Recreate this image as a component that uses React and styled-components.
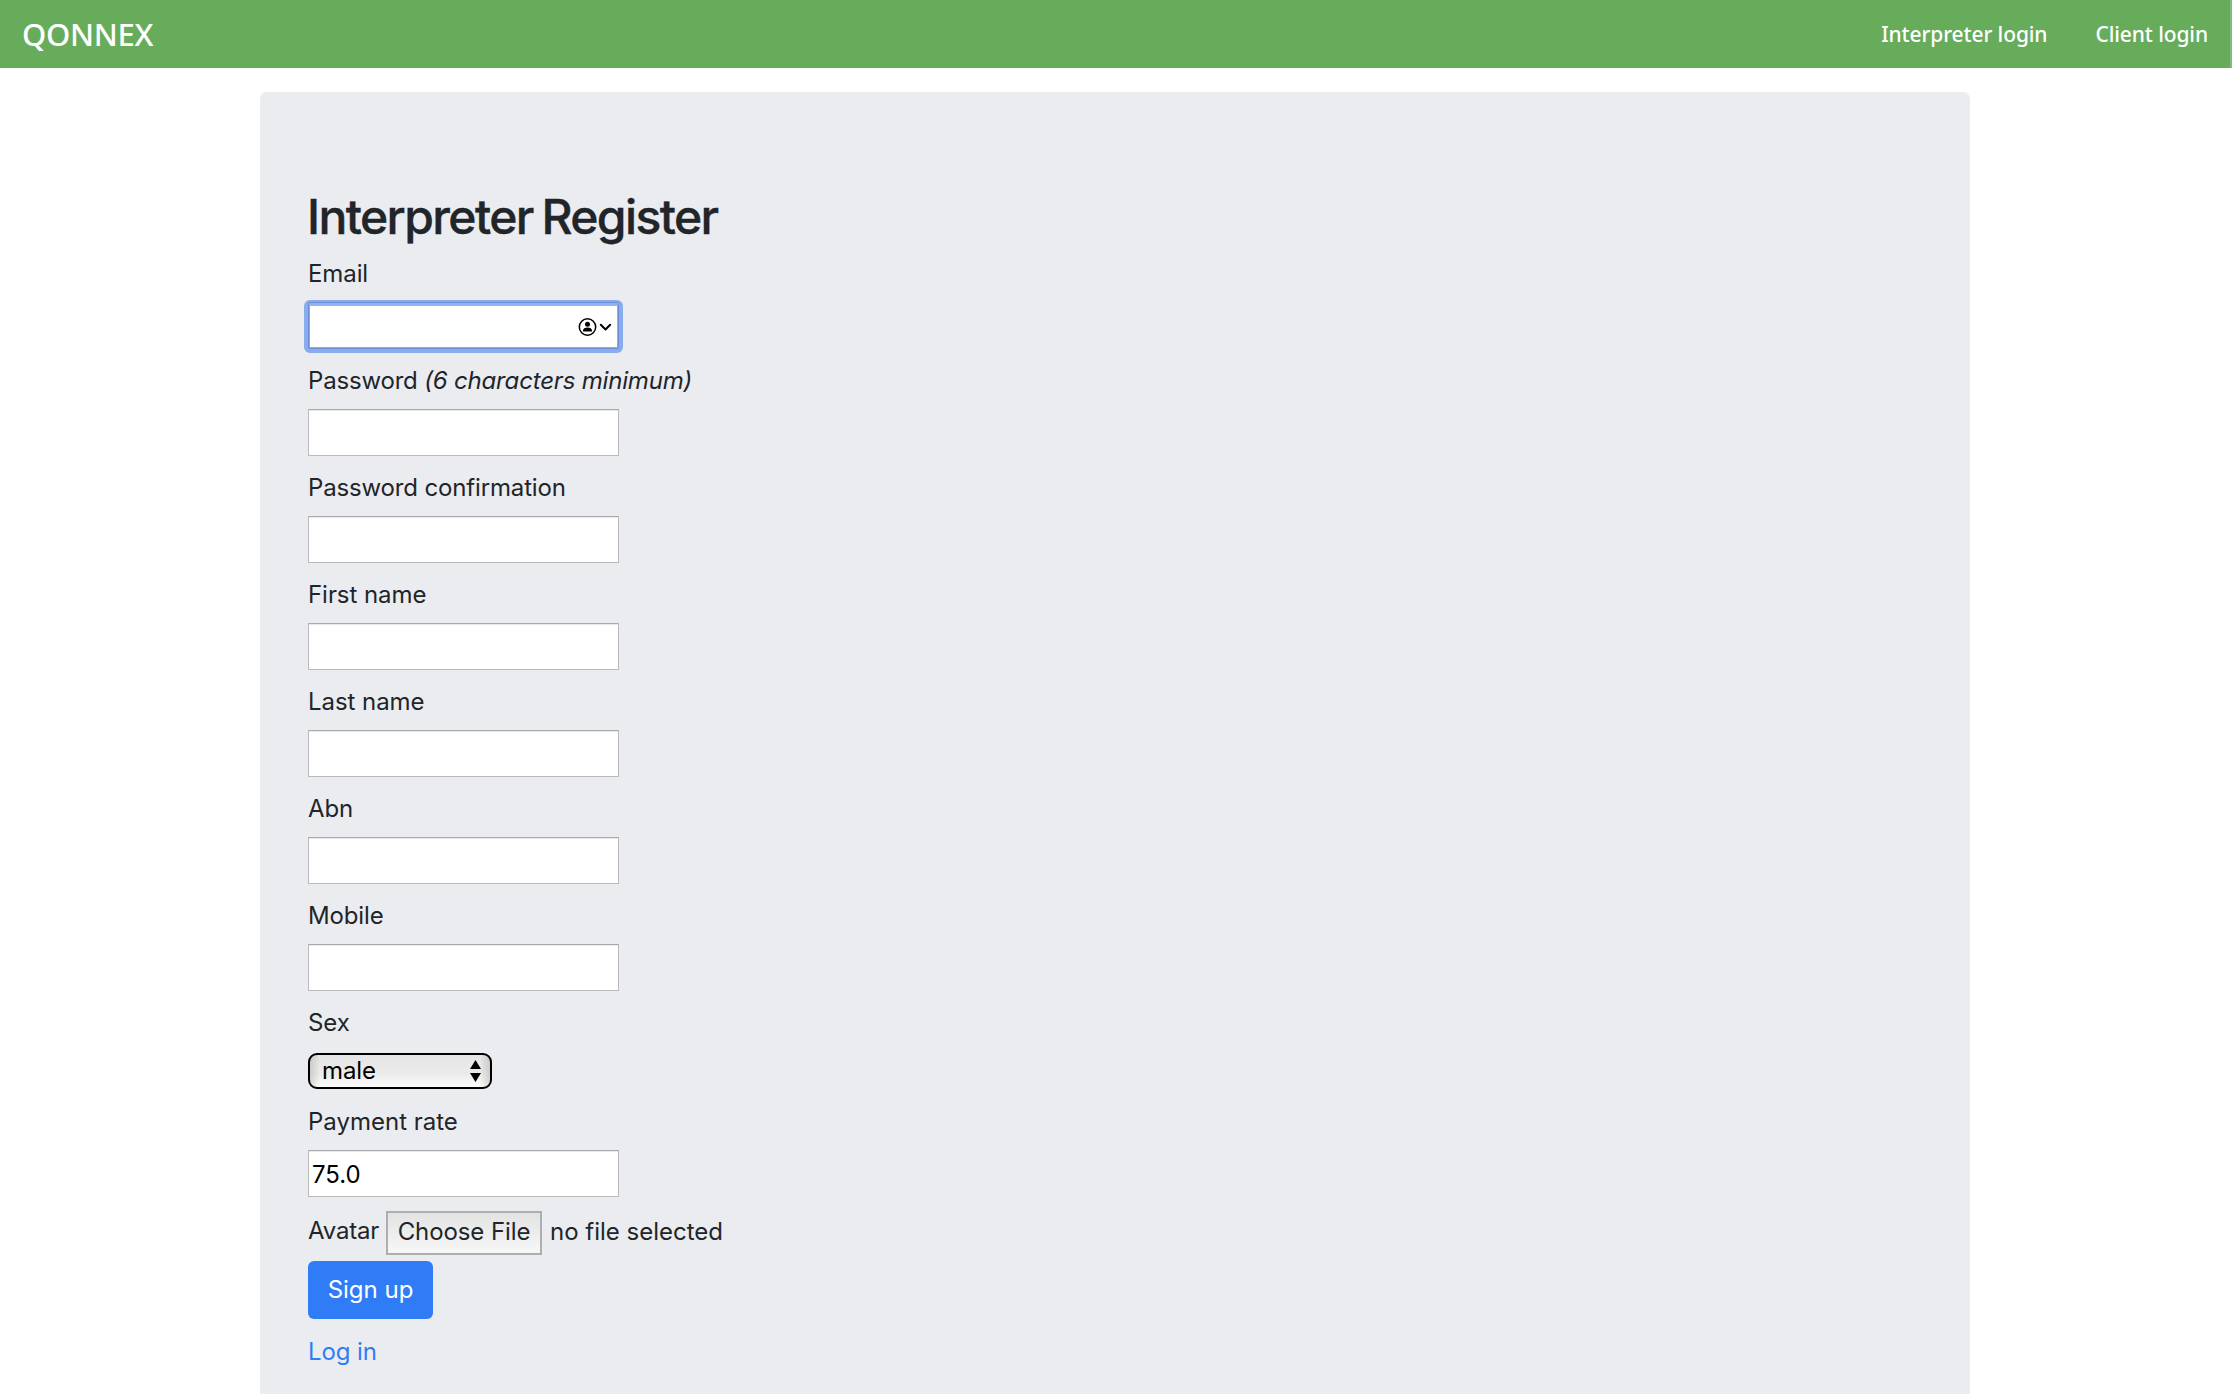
import React from "react";
import styled, { createGlobalStyle } from "styled-components";

const Global = createGlobalStyle`
  * { box-sizing: border-box; }
  html, body { margin: 0; height: 1394px; overflow: hidden; background: #fff; }
  body { font: 400 24px/36px Inter, "Liberation Sans", sans-serif; color: #212529; }
`;

const Navbar = styled.nav`
  display: flex;
  align-items: center;
  justify-content: space-between;
  height: 68px;
  padding: 0 22px 0 22px;
  background: #67ac5b;
  border-right: 2px solid #83bb7a;
  font-family: "Noto Sans", sans-serif;
  font-weight: 500;
  white-space: nowrap;
`;

const Brand = styled.a`
  color: #fff;
  font-size: 31px;
  letter-spacing: -0.3px;
`;

const NavLinks = styled.div`
  display: flex;
  gap: 48px;
`;

const NavLink = styled.a`
  color: #fff;
  font-size: 21px;
  letter-spacing: -0.1px;
`;

const Card = styled.main`
  width: 1710px;
  height: 1302px;
  margin: 24px 0 0 260px;
  padding: 96px 48px 0;
  background: #ebecf0;
  border-radius: 7px 7px 0 0;
`;

const Title = styled.h1`
  margin: 0 0 10px -1px;
  font-size: 48px;
  line-height: 58px;
  font-weight: 500;
  letter-spacing: -1.6px;
  word-spacing: -2.5px;
  white-space: nowrap;
  -webkit-text-stroke: 0.4px currentColor;
`;

const Field = styled.div`
  display: flex;
  flex-direction: column;
  align-items: flex-start;
  margin-bottom: ${(p) => p.$gap || 14}px;
`;

const Label = styled.label`
  margin-bottom: ${(p) => p.$gap || 10}px;
  letter-spacing: ${(p) => p.$track || "-0.1px"};
  white-space: nowrap;
`;

const Input = styled.div`
  display: flex;
  align-items: center;
  width: 311px;
  height: 47px;
  padding: 3px 4px 0 3px;
  background: #fff;
  border: 1px solid #b9babc;
  border-top-color: #a9aaad;
  box-shadow: inset 0 1px 0 #e9e9ea;
  color: #000;
`;

const FocusedInput = styled(Input)`
  justify-content: flex-end;
  padding: 3px 6px 0 0;
  border-color: #6c8fd5;
  box-shadow: 0 0 0 4px #8aabee, inset 0 3px 0 #92b1f2, inset 1px 0 0 #8aabee, inset -1px 0 0 #8aabee, inset 0 -1px 0 #8aabee;
  border-radius: 1px;
  clip-path: inset(-2px -4px -4px -4px round 6px);
`;

const Select = styled.div`
  display: flex;
  align-items: center;
  justify-content: space-between;
  width: 184px;
  height: 36px;
  padding: 0 9px 0 12px;
  border: 2px solid #000;
  border-radius: 9px;
  background: linear-gradient(90deg, rgba(150,150,150,.35), transparent 10px, transparent calc(100% - 10px), rgba(150,150,150,.35)), linear-gradient(#e5e5e5, #ebebeb 60%, #fdfdfd);
  color: #000;
  letter-spacing: -0.1px;
`;

const FileRow = styled.div`
  display: flex;
  align-items: center;
  height: 44px;
  margin-bottom: 6px;
  white-space: nowrap;
`;

const FileLabel = styled.span`
  width: 78px;
  padding-bottom: 4px;
  letter-spacing: -0.2px;
`;

const FileButton = styled.span`
  display: flex;
  align-items: center;
  justify-content: center;
  width: 156px;
  height: 44px;
  margin-right: 8px;
  padding-bottom: 2px;
  border: 2px solid #adaeae;
  background: linear-gradient(#e3e3e3, #f7f7f7);
  letter-spacing: -0.1px;
`;

const FileStatus = styled.span`
  padding-bottom: 2px;
`;

const SubmitButton = styled.button`
  display: flex;
  align-items: center;
  justify-content: center;
  width: 125px;
  height: 58px;
  padding: 0;
  border: 0;
  border-radius: 6px;
  background: #307cf7;
  color: #fff;
  font: inherit;
`;

const LoginLink = styled.a`
  display: block;
  margin-top: 15px;
  color: #307cf7;
  letter-spacing: -0.1px;
`;

const names = ["Password confirmation", "First name", "Last name", "Abn", "Mobile"];

function AccountIcon() {
  return (
    <svg width="34" height="20" viewBox="0 0 34 20">
      <circle cx="9.5" cy="10" r="8.2" fill="#fff" stroke="#000" strokeWidth="1.5" />
      <circle cx="9.5" cy="7.2" r="2.5" />
      <path d="M5 14.4v-.7c0-2 2-3.1 4.500-3.100s4.500 1.100 4.500 3.100v.7z" />
      <path d="M22.800 7.800l4.700 4.700 4.700-4.700" fill="none" stroke="#000" strokeWidth="2" strokeLinecap="round" strokeLinejoin="round" />
    </svg>
  );
}

function Arrows() {
  return (
    <svg width="11" height="22" viewBox="0 0 11 22">
      <path d="M5.500 0l5.500 9H0zM5.500 22L0 13h11z" />
    </svg>
  );
}

export default function App() {
  return (
    <>
      <Global />
      <Navbar>
        <Brand>QONNEX</Brand>
        <NavLinks>
          <NavLink>Interpreter login</NavLink>
          <NavLink>Client login</NavLink>
        </NavLinks>
      </Navbar>
      <Card>
        <Title>Interpreter Register</Title>
        <Field>
          <Label>Email</Label>
          <FocusedInput><AccountIcon /></FocusedInput>
        </Field>
        <Field>
          <Label $track="-0.18px">Password <em>(6 characters minimum)</em></Label>
          <Input />
        </Field>
        {names.map((name) => (
          <Field key={name}>
            <Label $track={name.endsWith("name") ? "-0.05px" : "-0.15px"}>{name}</Label>
            <Input />
          </Field>
        ))}
        <Field $gap={15}>
          <Label $gap={12}>Sex</Label>
          <Select>male<Arrows /></Select>
        </Field>
        <Field $gap={14}>
          <Label $track="0">Payment rate</Label>
          <Input>75.0</Input>
        </Field>
        <FileRow>
          <FileLabel>Avatar</FileLabel>
          <FileButton>Choose File</FileButton>
          <FileStatus>no file selected</FileStatus>
        </FileRow>
        <SubmitButton>Sign up</SubmitButton>
        <LoginLink>Log in</LoginLink>
      </Card>
    </>
  );
}
